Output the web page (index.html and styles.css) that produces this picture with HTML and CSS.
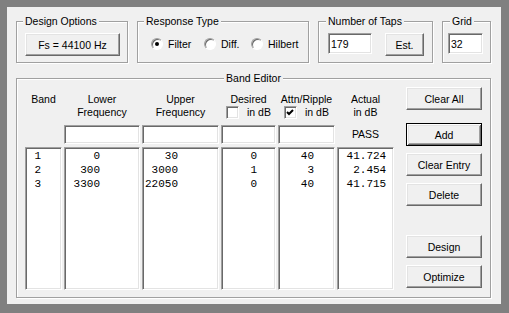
FILE: index.html
```html
<!DOCTYPE html>
<html lang="en">
<head>
  <meta charset="UTF-8" />
  <title>Filter Design</title>
  <meta name="viewport" content="width=device-width, initial-scale=1.0" />
  <link rel="stylesheet" href="styles.css">
</head>
<body>
  <div class="dialog">
    <div class="top-row">
      <div class="group design-opts">
        <div class="group-title">Design Options</div>
        <button class="btn fs-btn">Fs = 44100 Hz</button>
      </div>

      <div class="group response">
        <div class="group-title">Response Type</div>
        <div class="radios">
          <label class="radio filter"><span class="dot checked"></span>Filter</label>
          <label class="radio diff"><span class="dot"></span>Diff.</label>
          <label class="radio"><span class="dot"></span>Hilbert</label>
        </div>
      </div>

      <div class="group taps">
        <div class="group-title">Number of Taps</div>
        <div class="taps-row">
          <input class="field taps-field" value="179" />
          <button class="btn est-btn">Est.</button>
        </div>
      </div>

      <div class="group grid-opt">
        <div class="group-title">Grid</div>
        <input class="field grid-field" value="32" />
      </div>
    </div>

    <div class="group band-editor">
      <div class="group-title centered">Band Editor</div>
      <div class="editor-body">
        <div class="table">
          <div class="cols head">
            <div>Band</div>
            <div>Lower<br>Frequency</div>
            <div>Upper<br>Frequency</div>
            <div>Desired
              <div class="chk-line"><span class="chk"></span>in dB</div>
            </div>
            <div>Attn/Ripple
              <div class="chk-line">
                <span class="chk">
                  <svg viewBox="0 0 13 13" width="13" height="13"><polyline points="3,6 5,8 9,4" fill="none" stroke="#000" stroke-width="2" /></svg>
                </span>in dB
              </div>
            </div>
            <div>Actual<br>in dB</div>
          </div>

          <div class="cols inputs">
            <div></div>
            <input class="field" />
            <input class="field" />
            <input class="field" />
            <input class="field" />
            <div class="pass">PASS</div>
          </div>

          <div class="cols lists">
            <div class="list"> 1
 2
 3</div>
            <div class="list">    0
  300
 3300</div>
            <div class="list">   30
 3000
22050</div>
            <div class="list">    0
    1
    0</div>
            <div class="list">   40
    3
   40</div>
            <div class="list"> 41.724
  2.454
 41.715</div>
          </div>
        </div>

        <div class="side">
          <button class="btn">Clear All</button>
          <button class="btn default add-btn">Add</button>
          <button class="btn gap-sm">Clear Entry</button>
          <button class="btn gap-sm">Delete</button>
          <button class="btn design-btn">Design</button>
          <button class="btn gap-sm">Optimize</button>
        </div>
      </div>
    </div>
  </div>
</body>
</html>
```

FILE: styles.css
```css
body {
  margin: 0;
  background: #808080;
  font-family: "Liberation Sans", Arial, sans-serif;
  font-size: 10.5px;
  color: #000;
}

.dialog {
  margin: 7px;
  width: 494px;
  height: 297px;
  box-sizing: border-box;
  background: #f0f0f0;
  padding: 14px 0 0 9px;
}

.top-row {
  display: flex;
  gap: 9px;
}

/* etched group box */
.group {
  box-sizing: border-box;
  border: 1px solid #a0a0a0;
  box-shadow: inset 1px 1px 0 #fff, 1px 1px 0 #fff;
  padding: 0 8px;
}

.group-title {
  width: fit-content;
  margin: -7px 0 0 -2px;
  padding: 0 2px;
  background: #f0f0f0;
  line-height: 13px;
}

.group-title.centered {
  margin: -7px auto 0;
}

.design-opts { width: 112px; height: 42px; }
.response { width: 172px; height: 42px; }
.taps { width: 115px; height: 42px; padding-left: 9px; }
.grid-opt { width: 49px; height: 42px; padding-left: 5px; }
.grid-opt .group-title { margin-left: 2px; }

/* 3d buttons */
.btn {
  display: block;
  box-sizing: border-box;
  height: 23px;
  margin: 0;
  padding: 0;
  font: inherit;
  color: #000;
  background: #f0f0f0;
  border: 1px solid;
  border-color: #fff #696969 #696969 #fff;
  box-shadow: inset -1px -1px 0 #a0a0a0, inset 1px 1px 0 #e3e3e3;
}

.btn.default {
  border: 1px solid #000;
  box-shadow: inset 1px 1px 0 #fff, inset -1px -1px 0 #696969, inset 2px 2px 0 #e3e3e3, inset -2px -2px 0 #a0a0a0;
}

.fs-btn {
  width: 95px;
  margin-top: 5px;
}

/* sunken fields */
.field {
  box-sizing: border-box;
  margin: 0;
  padding: 0 0 0 2px;
  font: inherit;
  color: #000;
  background: #fff;
  border: 1px solid;
  border-color: #a0a0a0 #fff #fff #a0a0a0;
  box-shadow: inset 1px 1px 0 #696969, inset -1px -1px 0 #e3e3e3;
  outline: none;
}

.radios {
  display: flex;
  align-items: center;
  height: 13px;
  margin-top: 9px;
  padding-left: 5px;
}

.radio {
  display: flex;
  align-items: center;
}

.radio.filter { width: 53px; }
.radio.diff { width: 47px; }

.dot {
  box-sizing: border-box;
  width: 12px;
  height: 12px;
  margin-right: 5px;
  border-radius: 50%;
  border: 1px solid;
  border-color: #a0a0a0 #fff #fff #a0a0a0;
  background: #fff;
  box-shadow: inset 1px 1px 0 #696969;
  display: flex;
  align-items: center;
  justify-content: center;
}

.dot.checked::after {
  content: "";
  width: 4px;
  height: 4px;
  border-radius: 50%;
  background: #000;
}

.taps-row {
  display: flex;
  align-items: flex-start;
  margin-top: 5px;
}

.taps-field {
  width: 44px;
  height: 21px;
}

.est-btn {
  width: 42px;
  margin-left: 13px;
}

.grid-field {
  display: block;
  width: 35px;
  height: 21px;
  margin-top: 5px;
}

/* band editor */
.band-editor {
  width: 475px;
  height: 220px;
  margin-top: 15px;
}

.editor-body {
  display: flex;
  align-items: flex-start;
}

.table {
  margin-top: 8px;
}

.cols {
  display: grid;
  grid-template-columns: 37px 76px 77px 55px 57px 57px;
  column-gap: 2px;
}

.head {
  height: 26px;
  line-height: 13px;
  text-align: center;
}

.chk-line {
  display: flex;
  align-items: center;
  justify-content: center;
  height: 13px;
}

.chk {
  box-sizing: border-box;
  width: 13px;
  height: 13px;
  margin-right: 8px;
  background: #fff;
  border: 1px solid;
  border-color: #a0a0a0 #fff #fff #a0a0a0;
  box-shadow: inset 1px 1px 0 #696969, inset -1px -1px 0 #e3e3e3;
  position: relative;
}

.chk svg {
  position: absolute;
  left: -1px;
  top: -1px;
}

.inputs {
  height: 19px;
  margin-top: 6px;
}

.inputs .field {
  width: 100%;
  height: 19px;
}

.pass {
  line-height: 19px;
  text-align: center;
}

.lists {
  margin-top: 3px;
}

.list {
  box-sizing: border-box;
  height: 143px;
  padding: 1px 0 0 2px;
  background: #fff;
  border: 1px solid;
  border-color: #a0a0a0 #fff #fff #a0a0a0;
  box-shadow: inset 1px 1px 0 #696969, inset -1px -1px 0 #e3e3e3;
  font-family: "Liberation Mono", "Courier New", monospace;
  font-size: 11px;
  line-height: 14px;
  white-space: pre;
}

.side {
  width: 76px;
  margin: 2px 0 0 12px;
}

.side .btn { width: 76px; }
.side .add-btn { margin-top: 13px; }
.side .gap-sm { margin-top: 7px; }
.side .design-btn { margin-top: 29px; }
```
